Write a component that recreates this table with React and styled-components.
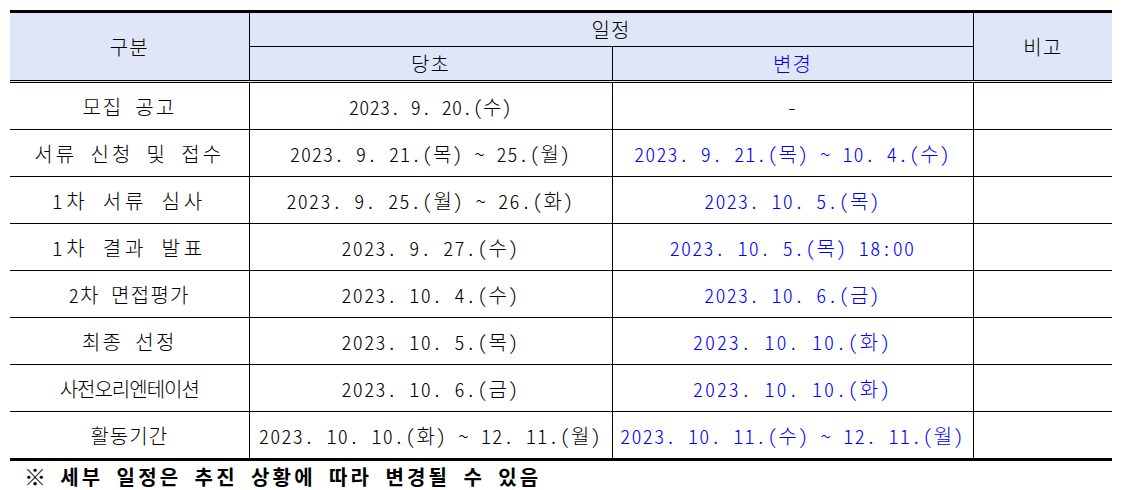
import React from "react"
import styled, { createGlobalStyle } from "styled-components"

const GlobalStyle = createGlobalStyle`
    body {
        margin: 0;
        background: #ffffff;
        font-family: "Noto Sans CJK KR", "Noto Sans", sans-serif;
        font-feature-settings: "hwid";
        color: #000000;
    }
`

const Page = styled.div`
    padding: 10px 0 0 10px;
`

const Table = styled.table`
    border-collapse: collapse;
    table-layout: fixed;
    width: 1102px;
    border-top: 3px solid #000;
    border-bottom: 3px solid #000;
    font-size: 20px;
    font-weight: 300;
`

const HeadCell = styled.th`
    background: #dfe6f7;
    font-weight: 300;
    height: ${(p) => (p.$tall ? 66 : 33)}px;
    padding: 0;
    text-align: center;
    letter-spacing: 1px;
    color: ${(p) => (p.$changed ? "#0000ff" : "#000")};
    border-left: ${(p) => (p.$first ? "none" : "1px solid #000")};
    border-bottom: ${(p) => (p.$split ? "1px solid #000" : "3px double #000")};
`

const Cell = styled.td`
    height: 46px;
    padding: 0;
    text-align: center;
    letter-spacing: ${(p) => p.$spacing ?? 1.2}px;
    color: ${(p) => (p.$changed ? "#0000ff" : "#000")};
    border-left: ${(p) => (p.$first ? "none" : "1px solid #000")};
    border-top: 1px solid #000;
    white-space: nowrap;
`

const Note = styled.div`
    margin: 2px 0 0 14px;
    font-size: 20px;
    line-height: 24px;
    font-weight: 700;
    letter-spacing: 3.2px;
`

const Mark = styled.span`
    font-size: 22px;
    letter-spacing: 1px;
`

// [label, label spacing, before, before spacing, after, after spacing]
const rows = [
    ["모집 공고", 2, "2023. 9. 20.(수)", 0.3, "-", 1.2],
    ["서류 신청 및 접수", 3.1, "2023. 9. 21.(목) ~ 25.(월)", 1, "2023. 9. 21.(목) ~ 10. 4.(수)", 1.1],
    ["1차 서류 심사", 4, "2023. 9. 25.(월) ~ 26.(화)", 1.3, "2023. 10. 5.(목)", 1.2],
    ["1차 결과 발표", 4, "2023. 9. 27.(수)", 1.3, "2023. 10. 5.(목) 18:00", 1.3],
    ["2차 면접평가", 1.3, "2023. 10. 4.(수)", 1.3, "2023. 10. 6.(금)", 1.2],
    ["최종 선정", 2.2, "2023. 10. 5.(목)", 1.3, "2023. 10. 10.(화)", 1.9],
    ["사전오리엔테이션", -1, "2023. 10. 6.(금)", 1.3, "2023. 10. 10.(화)", 1.9],
    ["활동기간", 1, "2023. 10. 10.(화) ~ 12. 11.(월)", 1.25, "2023. 10. 11.(수) ~ 12. 11.(월)", 1.3],
]

export default function App() {
    return (
        <Page>
            <GlobalStyle />
            <Table>
                <colgroup>
                    <col style={{ width: 239 }} />
                    <col style={{ width: 363 }} />
                    <col style={{ width: 361 }} />
                    <col style={{ width: 139 }} />
                </colgroup>
                <thead>
                    <tr>
                        <HeadCell rowSpan={2} $first $tall>구분</HeadCell>
                        <HeadCell colSpan={2} $split>일정</HeadCell>
                        <HeadCell rowSpan={2} $tall>비고</HeadCell>
                    </tr>
                    <tr>
                        <HeadCell>당초</HeadCell>
                        <HeadCell $changed>변경</HeadCell>
                    </tr>
                </thead>
                <tbody>
                    {rows.map(([label, ls, before, bs, after, as], i) => (
                        <tr key={label}>
                            <Cell $first $spacing={ls}>{label}</Cell>
                            <Cell $spacing={bs}>{before}</Cell>
                            <Cell $spacing={as} $changed={i > 0}>{after}</Cell>
                            <Cell />
                        </tr>
                    ))}
                </tbody>
            </Table>
            <Note><Mark>※</Mark> 세부 일정은 추진 상황에 따라 변경될 수 있음</Note>
        </Page>
    )
}
